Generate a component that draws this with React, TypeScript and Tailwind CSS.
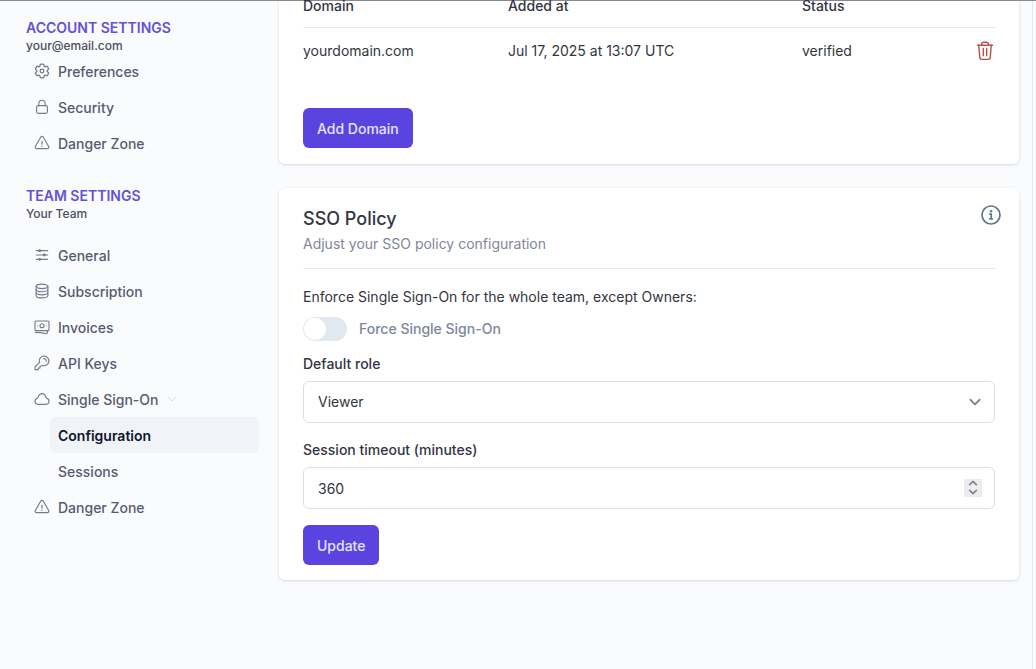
import { useState } from 'react';
import type { ReactNode } from 'react';

const Icon = ({
  children,
  className = 'h-4 w-4',
  viewBox = '0 0 24 24',
}: {
  children: ReactNode;
  className?: string;
  viewBox?: string;
}) => (
  <svg
    className={`${className} shrink-0`}
    viewBox={viewBox}
    fill="none"
    stroke="currentColor"
    strokeWidth={1.7}
    strokeLinecap="round"
    strokeLinejoin="round"
    aria-hidden="true"
  >
    {children}
  </svg>
);

const GearIcon = () => (
  <Icon viewBox="1.5 1.5 21 21">
    <path d="M9.594 3.94c.09-.542.56-.94 1.11-.94h2.593c.55 0 1.02.398 1.11.94l.213 1.281c.063.374.313.686.645.87.074.04.147.083.22.127.325.196.72.257 1.075.124l1.217-.456a1.125 1.125 0 0 1 1.37.49l1.296 2.247a1.125 1.125 0 0 1-.26 1.431l-1.003.827c-.293.241-.438.613-.43.992a7.723 7.723 0 0 1 0 .255c-.008.378.137.75.43.991l1.004.827c.424.35.534.955.26 1.43l-1.298 2.247a1.125 1.125 0 0 1-1.369.491l-1.217-.456c-.355-.133-.75-.072-1.076.124a6.47 6.47 0 0 1-.22.128c-.331.183-.581.495-.644.869l-.213 1.281c-.09.543-.56.94-1.11.94h-2.594c-.55 0-1.019-.398-1.11-.94l-.213-1.281c-.062-.374-.312-.686-.644-.87a6.52 6.52 0 0 1-.22-.127c-.325-.196-.72-.257-1.076-.124l-1.217.456a1.125 1.125 0 0 1-1.369-.49l-1.297-2.247a1.125 1.125 0 0 1 .26-1.431l1.004-.827c.292-.24.437-.613.43-.991a6.932 6.932 0 0 1 0-.255c.007-.38-.138-.751-.43-.992l-1.004-.827a1.125 1.125 0 0 1-.26-1.43l1.297-2.247a1.125 1.125 0 0 1 1.37-.491l1.216.456c.356.133.751.072 1.076-.124.072-.044.146-.086.22-.128.332-.183.582-.495.644-.869l.214-1.28Z" />
    <circle cx="12" cy="12" r="2.4" />
  </Icon>
);

const LockIcon = () => (
  <Icon>
    <rect x="3.800" y="10" width="16.400" height="11.500" rx="2.600" />
    <path d="M7.300 10V6.600a4.700 4.700 0 0 1 9.400 0V10" />
  </Icon>
);

const WarningIcon = () => (
  <Icon>
    <path d="M10.200 3 2 17.200A2.200 2.200 0 0 0 3.900 20.500h16.200a2.200 2.200 0 0 0 1.900-3.300L13.800 3a2.100 2.100 0 0 0-3.600 0Z" />
    <path d="M12 9v5M12 17v.2" />
  </Icon>
);

const SlidersIcon = () => (
  <Icon>
    <path d="M3.500 5.500h17M3.500 12h17M3.500 18.500h17" />
    <g fill="currentColor">
      <circle cx="8.500" cy="5.500" r="1.300" />
      <circle cx="15.500" cy="12" r="1.300" />
      <circle cx="8.500" cy="18.500" r="1.300" />
    </g>
  </Icon>
);

const DatabaseIcon = () => (
  <Icon>
    <ellipse cx="12" cy="5" rx="8.800" ry="3.400" />
    <path d="M3.200 5v14c0 1.900 3.900 3.400 8.800 3.400s8.800-1.500 8.800-3.400V5" />
    <path d="M3.200 9.700c0 1.900 3.900 3.400 8.800 3.400s8.800-1.500 8.800-3.400M3.200 14.400c0 1.900 3.900 3.400 8.800 3.400s8.800-1.500 8.800-3.400" />
  </Icon>
);

const MoneyIcon = () => (
  <Icon>
    <rect x="1.500" y="3" width="21" height="14.500" rx="1.500" />
    <circle cx="12" cy="10.200" r="3" />
    <path d="M5.500 10.200h.010M18.500 10.200h.010" />
    <path d="M2 20c5.500 0 10 .500 15.500 1.800 1.500.300 2.700-.600 2.700-2V17.500" />
  </Icon>
);

const KeyIcon = () => (
  <Icon>
    <path d="M15.200 1.500a7.300 7.300 0 0 0-6.900 9.700L1.500 18v4h5v-2.500H9V17l3.700-1.300a7.300 7.300 0 1 0 2.500-14.200Z" />
    <path d="M14.500 5.500a3.500 3.500 0 0 1 4 4" />
  </Icon>
);

const CloudIcon = () => (
  <Icon>
    <path d="M5.800 20a4.600 4.600 0 0 1-1.300-8.900c.700-.200 1.100-.600 1.400-1.300C7 6.500 9 4 12 4s5 2.500 6.100 5.800c.300.700.700 1.100 1.400 1.300A4.600 4.600 0 0 1 18.200 20Z" />
  </Icon>
);

const TrashIcon = () => (
  <Icon className="h-5 w-5">
    <path d="M3 5h18M8 5V4a2.500 2.500 0 0 1 2.500-2.500h3A2.500 2.500 0 0 1 16 4v1" />
    <path d="m4.500 5 1.200 14.500A2.500 2.500 0 0 0 8.200 22h7.600a2.500 2.500 0 0 0 2.500-2.500L19.500 5M10 9v8.500M14 9v8.500" />
  </Icon>
);

const InfoIcon = () => (
  <svg className="h-5 w-5" viewBox="0 0 20 20" fill="none" stroke="currentColor" strokeWidth={1.7} aria-hidden="true">
    <circle cx="10" cy="10" r="9" />
    <path d="M8.200 9.200h2V14M8 14h4.200" />
    <circle cx="10" cy="6.300" r="1.200" fill="currentColor" stroke="none" />
  </svg>
);

const Chevron = ({ className }: { className: string }) => (
  <Icon className={className}>
    <path d="m4 8 8 8 8-8" />
  </Icon>
);

const accountItems = [
  { label: 'Preferences', icon: <GearIcon /> },
  { label: 'Security', icon: <LockIcon /> },
  { label: 'Danger Zone', icon: <WarningIcon /> },
];

const teamItems = [
  { label: 'General', icon: <SlidersIcon /> },
  { label: 'Subscription', icon: <DatabaseIcon /> },
  { label: 'Invoices', icon: <MoneyIcon /> },
  { label: 'API Keys', icon: <KeyIcon /> },
  {
    label: 'Single Sign-On',
    icon: <CloudIcon />,
    children: [{ label: 'Configuration', active: true }, { label: 'Sessions' }],
  },
  { label: 'Danger Zone', icon: <WarningIcon /> },
];

type Item = {
  label: string;
  icon: ReactNode;
  children?: { label: string; active?: boolean }[];
};

const NavList = ({ items }: { items: Item[] }) => (
  <ul>
    {items.map((item) => (
      <li key={item.label}>
        <a href="#" className="flex h-9 items-center gap-2 pl-2">
          <span className="text-[#757b8c]">{item.icon}</span>
          <span className="pt-0.5">{item.label}</span>
          {item.children && <Chevron className="h-3 w-3 text-slate-300" />}
        </a>
        {item.children && (
          <ul className="pl-6">
            {item.children.map((child) => (
              <li key={child.label}>
                <a
                  href="#"
                  className={`flex h-9 items-center rounded-md px-2 pt-0.5 ${
                    child.active ? 'bg-[#f0f3f8] font-semibold text-slate-900' : ''
                  }`}
                >
                  {child.label}
                </a>
              </li>
            ))}
          </ul>
        )}
      </li>
    ))}
  </ul>
);

const NavGroup = ({ title, subtitle, children }: { title: string; subtitle: string; children: ReactNode }) => (
  <section>
    <h2 className="text-sm leading-[22px] font-semibold uppercase text-[#6450d8]">{title}</h2>
    <p className="text-xs leading-[14px] text-[#4b4f5e]">{subtitle}</p>
    {children}
  </section>
);

export default function App() {
  const [forced, setForced] = useState(false);
  const [timeoutMinutes, setTimeoutMinutes] = useState(360);

  return (
    <div className="flex min-h-screen border-t border-[#8c8a91] bg-[#fafbfd] font-['Inter',sans-serif] text-sm text-[#33353f]">
      <aside className="w-[259px] shrink-0 pt-4 pl-[26px] font-medium text-[#565c6e]">
        <nav className="flex flex-col gap-6">
          <NavGroup title="Account Settings" subtitle="your@email.com">
            <NavList items={accountItems} />
          </NavGroup>
          <NavGroup title="Team Settings" subtitle="Your Team">
            <div className="pt-4">
              <NavList items={teamItems} />
            </div>
          </NavGroup>
        </nav>
      </aside>

      <main className="flex min-w-0 flex-1 flex-col gap-6 pr-[13px] pl-5">
        <section className="rounded-b-md bg-white px-6 pb-4 shadow-[0_1px_3px_rgba(15,23,42,0.15)]">
          <table className="w-full table-fixed text-left">
            <thead>
              <tr className="border-b border-[#e9eaee] leading-[10px]">
                <th className="w-[205px] pb-4 font-medium">Domain</th>
                <th className="pb-4 font-medium">Added at</th>
                <th className="w-[153px] pb-4 font-medium">Status</th>
                <th className="w-10 pb-4" aria-label="Actions" />
              </tr>
            </thead>
            <tbody>
              <tr className="h-[46px]">
                <td>yourdomain.com</td>
                <td>Jul 17, 2025 at 13:07 UTC</td>
                <td>verified</td>
                <td>
                  <button type="button" aria-label="Delete domain" className="ml-auto block text-[#b5534b]">
                    <TrashIcon />
                  </button>
                </td>
              </tr>
            </tbody>
          </table>
          <button type="button" className="mt-[34px] h-10 rounded-md bg-[#5b43e0] px-[14px] pt-0.5 font-medium text-indigo-100">
            Add Domain
          </button>
        </section>

        <section className="rounded-md bg-white px-6 pt-[17px] pb-[15px] shadow-[0_1px_3px_rgba(15,23,42,0.15)]">
          <header className="relative border-b border-[#e9eaee] pb-[13px]">
            <h1 className="text-lg font-medium">SSO Policy</h1>
            <p className="leading-[22px] text-[#7f8799]">Adjust your SSO policy configuration</p>
            <button type="button" aria-label="About SSO policy" className="absolute top-0 -right-1.5 text-slate-500">
              <InfoIcon />
            </button>
          </header>

          <form className="flex flex-col pt-[17px] leading-[22px]" onSubmit={(e) => e.preventDefault()}>
            <p>Enforce Single Sign-On for the whole team, except Owners:</p>
            <label className="mt-[9px] flex h-6 items-center gap-3 font-medium text-[#7d879a]">
              <input
                type="checkbox"
                role="switch"
                checked={forced}
                onChange={(e) => setForced(e.target.checked)}
                className="peer sr-only"
              />
              <span className="flex h-6 w-11 items-center rounded-full bg-slate-200 p-px peer-checked:justify-end peer-checked:bg-[#5b43e0]">
                <span className="h-[22px] w-[22px] rounded-full bg-white" />
              </span>
              Force Single Sign-On
            </label>

            <label htmlFor="role" className="mt-3 font-medium">
              Default role
            </label>
            <div className="relative mt-1.5">
              <select
                id="role"
                className="block h-[42px] w-full appearance-none rounded-md border border-[#dcdee5] bg-white px-[14px]"
              >
                <option>Viewer</option>
                <option>Editor</option>
                <option>Admin</option>
              </select>
              <span className="pointer-events-none absolute inset-y-0 right-[13px] flex items-center text-[#747b91]">
                <Chevron className="h-3.5 w-3.5 stroke-3" />
              </span>
            </div>

            <label htmlFor="timeout" className="mt-4 font-medium">
              Session timeout (minutes)
            </label>
            <div className="relative mt-1.5">
              <input
                id="timeout"
                type="number"
                value={timeoutMinutes}
                onChange={(e) => setTimeoutMinutes(Number(e.target.value))}
                className="block h-[42px] w-full appearance-none rounded-md border border-[#dcdee5] bg-white px-[14px] pt-0.5 [-moz-appearance:textfield] [&::-webkit-inner-spin-button]:appearance-none"
              />
              <div className="absolute inset-y-0 right-[13px] flex flex-col justify-center text-[#85858d]">
                <button
                  type="button"
                  aria-label="Increase timeout"
                  onClick={() => setTimeoutMinutes(timeoutMinutes + 1)}
                  className="flex h-[9px] w-[18px] items-center justify-center bg-[#ececee]"
                >
                  <Chevron className="h-2.5 w-2.5 rotate-180 stroke-4" />
                </button>
                <button
                  type="button"
                  aria-label="Decrease timeout"
                  onClick={() => setTimeoutMinutes(timeoutMinutes - 1)}
                  className="flex h-[9px] w-[18px] items-center justify-center bg-[#ececee]"
                >
                  <Chevron className="h-2.5 w-2.5 stroke-4" />
                </button>
              </div>
            </div>

            <button
              type="submit"
              className="mt-4 h-10 self-start rounded-md bg-[#5b43e0] px-[14px] pt-0.5 font-medium text-indigo-100"
            >
              Update
            </button>
          </form>
        </section>
      </main>

      <div className="w-1 shrink-0 border-l border-slate-200" />
    </div>
  );
}
